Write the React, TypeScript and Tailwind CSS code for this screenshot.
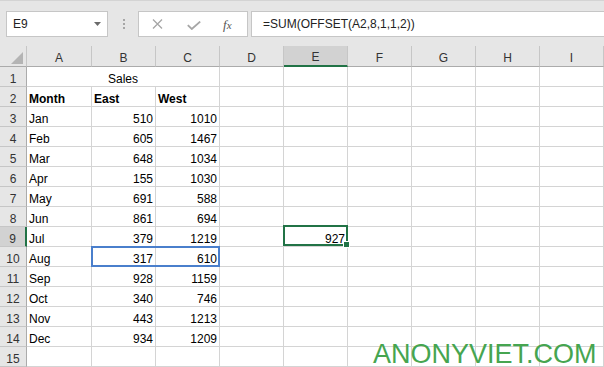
import React from "react";

type Row = { a?: string; b?: string; c?: string; bold?: boolean; merged?: string };

const rows: Row[] = [
  { merged: "Sales" },
  { a: "Month", b: "East", c: "West", bold: true },
  { a: "Jan", b: "510", c: "1010" },
  { a: "Feb", b: "605", c: "1467" },
  { a: "Mar", b: "648", c: "1034" },
  { a: "Apr", b: "155", c: "1030" },
  { a: "May", b: "691", c: "588" },
  { a: "Jun", b: "861", c: "694" },
  { a: "Jul", b: "379", c: "1219" },
  { a: "Aug", b: "317", c: "610" },
  { a: "Sep", b: "928", c: "1159" },
  { a: "Oct", b: "340", c: "746" },
  { a: "Nov", b: "443", c: "1213" },
  { a: "Dec", b: "934", c: "1209" },
  {},
];

const cols = ["A", "B", "C", "D", "E", "F", "G", "H", "I"];

const cellBase =
  "relative h-[20px] border-r border-b border-[#d4d4d4] flex items-end px-[2px] text-[12px] leading-[14px] text-black whitespace-nowrap";

function Cell({
  children,
  right,
  bold,
  className = "",
  overlay,
}: {
  children?: React.ReactNode;
  right?: boolean;
  bold?: boolean;
  className?: string;
  overlay?: React.ReactNode;
}) {
  return (
    <div
      className={`${cellBase} ${right ? "justify-end" : "justify-start"} ${bold ? "font-bold" : ""} ${className}`}
    >
      {children}
      {overlay}
    </div>
  );
}

export default function App() {
  return (
    <div className="relative w-[604px] h-[367px] overflow-hidden bg-white font-['Liberation_Sans',Arial,sans-serif]">
      {/* Formula bar */}
      <div className="h-[46px] bg-[#e6e6e6] border-t border-[#d4d4d4] flex items-start pt-[10px]">
        <div className="ml-[6px] w-[102px] h-[26px] bg-white border border-[#c6c6c6] flex items-center justify-between pl-[6px] pr-[6px]">
          <span className="text-[12px] leading-none text-[#222]">E9</span>
          <svg width="7" height="4" viewBox="0 0 7 4">
            <polygon points="0,0 7,0 3.5,4" fill="#6b6b6b" />
          </svg>
        </div>
        <div className="ml-[15px] w-[2px] h-[26px] flex flex-col items-center justify-center gap-[2px]">
          <span className="w-[2px] h-[2px] bg-[#a6a6a6]" />
          <span className="w-[2px] h-[2px] bg-[#a6a6a6]" />
          <span className="w-[2px] h-[2px] bg-[#a6a6a6]" />
        </div>
        <div className="ml-[13px] w-[110px] h-[26px] bg-white border border-[#c6c6c6] flex items-center">
          <svg className="ml-[13px]" width="11" height="10" viewBox="0 0 11 10">
            <path d="M1 0.5 L10 9.5 M10 0.5 L1 9.5" stroke="#a6a6a6" strokeWidth="1.3" fill="none" />
          </svg>
          <svg className="ml-[24px] mt-[2px]" width="14" height="9" viewBox="0 0 14 9">
            <path d="M0.8 4.2 L4.8 8 L13.2 0.6" stroke="#a6a6a6" strokeWidth="1.8" fill="none" />
          </svg>
          <span className="ml-[22px] text-[13px] leading-none italic text-[#555] font-['Liberation_Serif',serif]">
            f<span className="text-[11px]">x</span>
          </span>
        </div>
        <div className="ml-[3px] flex-1 h-[26px] bg-white border border-r-0 border-[#c6c6c6] flex items-center pl-[11px]">
          <span className="text-[12px] leading-none text-[#222]">=SUM(OFFSET(A2,8,1,1,2))</span>
        </div>
      </div>

      {/* Sheet grid */}
      <div className="grid grid-cols-[27px_65px_repeat(8,64px)]">
        {/* header row */}
        <div className="h-[21px] bg-[#e6e6e6] border-r border-r-[#c6c6c6] border-b border-b-[#ababab] flex items-end justify-end pr-[3px] pb-[2px]">
          <svg width="12" height="12" viewBox="0 0 12 12">
            <polygon points="12,0 12,12 0,12" fill="#b4b4b4" />
          </svg>
        </div>
        {cols.map((c) => (
          <div
            key={c}
            className={`h-[21px] border-r border-r-[#c6c6c6] flex items-end justify-center pb-[1px] text-[12px] leading-[14px] text-[#333] ${
              c === "E"
                ? "bg-[#d2d2d2] border-b-2 border-b-[#217346]"
                : "bg-[#e6e6e6] border-b border-b-[#ababab]"
            }`}
          >
            {c}
          </div>
        ))}

        {rows.map((r, i) => {
          const n = i + 1;
          const sel = n === 9;
          return (
            <React.Fragment key={n}>
              <div
                className={`h-[20px] border-b border-b-[#c6c6c6] flex items-end justify-center text-[12px] leading-[14px] text-[#333] ${
                  sel
                    ? "bg-[#d2d2d2] border-r-2 border-r-[#217346]"
                    : "bg-[#e6e6e6] border-r border-r-[#ababab]"
                }`}
              >
                {n}
              </div>
              {r.merged ? (
                <div className={`${cellBase} col-span-3 justify-center`}>{r.merged}</div>
              ) : (
                <>
                  <Cell bold={r.bold}>{r.a}</Cell>
                  <Cell
                    bold={r.bold}
                    right={!r.bold}
                    overlay={
                      n === 10 ? (
                        <div className="absolute -left-[1px] -top-[1px] w-[129px] h-[21px] border-2 border-[#4a7fcc] z-10 pointer-events-none" />
                      ) : null
                    }
                  >
                    {r.b}
                  </Cell>
                  <Cell bold={r.bold} right={!r.bold}>
                    {r.c}
                  </Cell>
                </>
              )}
              <Cell />
              <Cell
                right
                overlay={
                  sel ? (
                    <>
                      <div className="absolute -left-[1px] -top-[2px] -right-[1px] bottom-0 border-2 border-[#217346] z-10" />
                      <div className="absolute right-[-3px] bottom-[-2px] w-[7px] h-[7px] bg-[#217346] border border-white z-20" />
                    </>
                  ) : null
                }
              >
                {sel ? "927" : ""}
              </Cell>
              <Cell />
              <Cell />
              <Cell />
              <Cell />
            </React.Fragment>
          );
        })}
      </div>

      {/* watermark */}
      <div className="absolute left-[373px] top-[343px] text-[27px] leading-[22px] text-[#46a550] whitespace-nowrap font-['Liberation_Sans',sans-serif] pointer-events-none">
        ANONYVIET.COM
      </div>
    </div>
  );
}
